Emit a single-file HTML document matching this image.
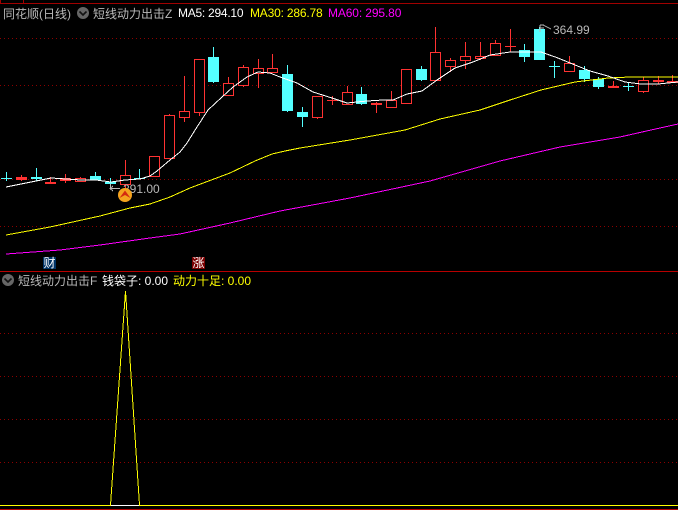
<!DOCTYPE html>
<html>
<head>
<meta charset="utf-8">
<style>
html,body{margin:0;padding:0;background:#000;}
body{width:678px;height:510px;overflow:hidden;position:relative;}
svg{position:absolute;left:0;top:0;}
text{font-family:"Liberation Sans","WenQuanYi Zen Hei","Noto Sans CJK SC",sans-serif;font-size:12px;}
</style>
</head>
<body>
<svg width="678" height="510" viewBox="0 0 678 510" xmlns="http://www.w3.org/2000/svg">
<defs>
<pattern id="d" x="0" y="0" width="4" height="1" patternUnits="userSpaceOnUse"><rect width="1" height="1" fill="#8c0000"/></pattern>
</defs>
<rect width="678" height="510" fill="#000"/>
<g shape-rendering="crispEdges">
<!-- frame -->
<path d="M0 3.5H678M0.5 0V3M23.5 0V3" stroke="#a00000" fill="none"/>
<path d="M0 271.5H678M0 509.5H678" stroke="#b80000" fill="none"/>
<!-- grid -->
<rect x="0" y="38" width="678" height="1" fill="url(#d)"/>
<rect x="0" y="85" width="678" height="1" fill="url(#d)"/>
<rect x="0" y="179" width="678" height="1" fill="url(#d)"/>
<rect x="0" y="226" width="678" height="1" fill="url(#d)"/>
<rect x="0" y="333" width="678" height="1" fill="url(#d)"/>
<rect x="0" y="376" width="678" height="1" fill="url(#d)"/>
<rect x="0" y="419" width="678" height="1" fill="url(#d)"/>
<rect x="0" y="462" width="678" height="1" fill="url(#d)"/>
<!-- red wicks -->
<path fill="none" stroke="#ff3232" d="M21.5 175V181M50.5 177V184M65.5 174V183M80.5 177V178M125.5 160V192M169.5 114V115M184.5 76V122M199.5 112V116M228.5 77V83M243.5 65V87M258.5 59V88M272.5 54V68M317.5 116V119M332.5 96V105M347.5 86V92M376.5 102V113M391.5 91V100M435.5 27V52M450.5 58V72M465.5 42V69M480.5 42V60M495.5 40V43M510.5 29V52M569.5 56V63M613.5 81V86M643.5 77V93M658.5 76V84M672.5 75V83"/>
<!-- red hollow -->
<g fill="#000" stroke="#ff3232">
<rect x="75.5" y="178.5" width="10" height="3"/>
<rect x="120.5" y="175.5" width="10" height="9"/>
<rect x="149.5" y="156.5" width="10" height="20"/>
<rect x="164.5" y="115.5" width="10" height="43"/>
<rect x="179.5" y="111.5" width="10" height="6"/>
<rect x="194.5" y="59.5" width="10" height="53"/>
<rect x="223.5" y="83.5" width="10" height="12"/>
<rect x="238.5" y="67.5" width="10" height="18"/>
<rect x="253.5" y="68.5" width="10" height="5"/>
<rect x="267.5" y="68.5" width="10" height="4"/>
<rect x="312.5" y="96.5" width="10" height="21"/>
<rect x="342.5" y="92.5" width="10" height="12"/>
<rect x="386.5" y="100.5" width="10" height="7"/>
<rect x="401.5" y="69.5" width="10" height="34"/>
<rect x="430.5" y="52.5" width="10" height="28"/>
<rect x="445.5" y="60.5" width="10" height="6"/>
<rect x="460.5" y="56.5" width="10" height="4"/>
<rect x="475.5" y="56.5" width="10" height="2"/>
<rect x="490.5" y="43.5" width="10" height="12"/>
<rect x="564.5" y="63.5" width="10" height="8"/>
<rect x="638.5" y="80.5" width="10" height="11"/>
</g>
<!-- red solid -->
<g fill="#ff3232">
<rect x="16" y="177" width="11" height="3"/>
<rect x="45" y="182" width="11" height="2"/>
<rect x="60" y="178" width="11" height="3"/>
<rect x="327" y="100" width="11" height="1"/>
<rect x="371" y="103" width="11" height="2"/>
<rect x="505" y="46" width="11" height="1"/>
<rect x="608" y="86" width="11" height="2"/>
<rect x="653" y="80" width="11" height="2"/>
<rect x="667" y="81" width="11" height="2"/>
</g>
<!-- cyan wicks -->
<path fill="none" stroke="#54ffff" d="M6.5 172V181M36.5 168V181M95.5 172V176M110.5 178V189M139.5 169V179M213.5 47V83M287.5 65V112M302.5 107V127M361.5 87V105M421.5 66V81M524.5 44V62M539.5 27V29M554.5 61V78M584.5 66V82M598.5 77V89M628.5 83V91"/>
<!-- cyan bodies -->
<g fill="#54ffff">
<rect x="1" y="178" width="11" height="1"/>
<rect x="31" y="177" width="11" height="2"/>
<rect x="90" y="176" width="11" height="4"/>
<rect x="105" y="182" width="11" height="2"/>
<rect x="134" y="178" width="11" height="1"/>
<rect x="208" y="57" width="11" height="25"/>
<rect x="282" y="74" width="11" height="37"/>
<rect x="297" y="112" width="11" height="5"/>
<rect x="356" y="94" width="11" height="10"/>
<rect x="416" y="69" width="11" height="11"/>
<rect x="519" y="50" width="11" height="7"/>
<rect x="534" y="29" width="11" height="31"/>
<rect x="549" y="66" width="11" height="1"/>
<rect x="579" y="70" width="11" height="9"/>
<rect x="593" y="79" width="11" height="8"/>
<rect x="623" y="86" width="11" height="1"/>
</g>
<!-- MA lines -->
<polyline fill="none" stroke="#ff00ff" points="6,254 60,250 100,245 150,238 180,234 230,223 280,211 350,198 430,181 500,161 560,147 620,137 651,130 678,124"/>
<polyline fill="none" stroke="#ffff00" points="6,235 50,227 100,216 130,208 150,204 170,197 190,188 230,173 255,161 272,154 285,151 300,148 350,140 405,130 440,119 480,110 510,100 541,90 575,82 608,78 630,77 678,77"/>
<polyline fill="none" stroke="#ffffff" points="6,187 21,184 36,181 51,178 66,179 81,180 96,180 111,182 125,180 140,179 150,176 157,171 170,160 180,152 187,143 197,127 208,110 222,97 233,87 247,77 258,72 270,73 280,77 297,83 313,92 332,98 347,103 367,101 383,100 393,100 407,94 422,91 437,80 455,68 473,62 490,55 510,52 541,52 558,58 575,65 590,71 608,76 625,82 641,84 658,84 678,82"/>
<!-- lower pane -->
<path fill="none" stroke="#ffff00" d="M0 505.5H111M139 505.5H678"/>
<path fill="none" stroke="#ffffff" d="M111 505.5H139"/>
<polyline fill="none" stroke="#ffff00" points="110.5,505 125.5,291 139.5,505"/>
<!-- price pointers -->
<path fill="none" stroke="#b8b8b8" d="M110.5 184V189M110 188.5H120M113 186L110 188.500L113 191"/>
<path fill="none" stroke="#b8b8b8" d="M540 25V32M540 25H544M540 28H544M543 25L551 29"/>
<!-- tags -->
<rect x="43" y="257" width="13" height="12" fill="#003366"/>
<rect x="192" y="257" width="13" height="12" fill="#7a0000"/>
</g>
<!-- labels -->
<text x="3" y="18" fill="#b8b8b8">同花顺(日线)</text>
<circle cx="83" cy="13" r="6" fill="#666"/>
<path d="M79.5 11.5L83 15L86.5 11.5" fill="none" stroke="#111" stroke-width="1.6"/>
<text x="93" y="18" fill="#b8b8b8">短线动力出击Z</text>
<text x="178" y="17" fill="#fff" textLength="65.500">MA5: 294.10</text>
<text x="250" y="17" fill="#ffff00" textLength="72.700">MA30: 286.78</text>
<text x="328" y="17" fill="#ff00ff" textLength="73.400">MA60: 295.80</text>
<text x="553" y="34" fill="#b8b8b8">364.99</text>
<text x="123" y="193" fill="#b8b8b8">291.00</text>
<circle cx="125" cy="195" r="7" fill="#f5a31e"/>
<path d="M119.5 198L125 190.500L130.5 198L125 195Z" fill="#d42a10"/>
<text x="49.5" y="267" fill="#fff" text-anchor="middle">财</text>
<text x="198.5" y="267" fill="#fff" text-anchor="middle">涨</text>
<circle cx="8" cy="280" r="6" fill="#666"/>
<path d="M4.5 278.500L8 282L11.5 278.500" fill="none" stroke="#111" stroke-width="1.6"/>
<text x="18" y="285" fill="#b8b8b8">短线动力出击F</text>
<text x="102" y="285" fill="#fff">钱袋子: 0.00</text>
<text x="173" y="285" fill="#ffff00">动力十足: 0.00</text>
</svg>
</body>
</html>
